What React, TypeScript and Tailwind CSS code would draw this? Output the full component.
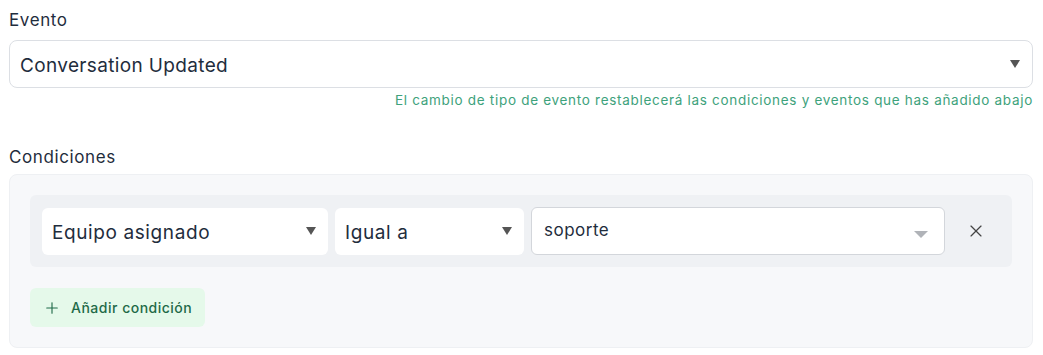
import { X, Plus } from "lucide-react";

// Small solid caret used by the native-looking selects
const Caret = ({ className }: { className?: string }) => (
    <svg width="10" height="8" viewBox="0 0 10 8" className={className}>
        <path d="M0 0 L10 0 L5 8 Z" fill="currentColor" />
    </svg>
);

const SelectBox = ({ label, width }: { label: string; width: string }) => (
    <div className={`${width} h-[47px] bg-white rounded-md flex items-center justify-between pl-[10px] pr-[12px]`}>
        <span className="text-[19px] tracking-[0.6px] text-[#1f2d3d] pt-[4px]">{label}</span>
        <Caret className="text-[#555]" />
    </div>
);

const App: React.FC = () => {
    return (
        <div
            className="w-[1043px] h-[355px] bg-white pl-[9px] pr-[10px] pt-[8px]"
            style={{ fontFamily: "Inter, 'Noto Sans', sans-serif" }}
        >
            {/* Evento */}
            <label className="block text-[17px] leading-6 text-[#1f2d3d] tracking-[0.6px]">Evento</label>
            <div className="mt-2 h-[48px] border border-[#dcdfe4] rounded-lg flex items-center justify-between pl-[10px] pr-[12px]">
                <span className="text-[19px] text-[#1f2d3d] tracking-[0.35px] pt-[4px]">Conversation Updated</span>
                <Caret className="text-[#555]" />
            </div>
            <p className="mt-[3px] text-right text-[13.5px] leading-[18px] text-[#3ea27c] tracking-[0.7px]">
                El cambio de tipo de evento restablecerá las condiciones y eventos que has añadido abajo
            </p>

            {/* Condiciones */}
            <label className="block mt-[36px] text-[17px] leading-6 text-[#1f2d3d] tracking-[0.6px]">Condiciones</label>
            <section className="mt-[5px] bg-[#f7f8fa] border border-[#eef0f3] rounded-lg px-[20px] pt-[20px] pb-[20px]">
                <div className="bg-[#eff1f4] rounded-md flex items-center gap-[7px] px-[12px] py-[12px]">
                    <SelectBox label="Equipo asignado" width="w-[286px]" />
                    <SelectBox label="Igual a" width="w-[189px]" />
                    <div className="flex-1 h-[48px] bg-white border border-[#d3d6db] rounded-md flex items-center justify-between pl-[12px] pr-[16px]">
                        <span className="text-[17px] tracking-[0.5px] text-[#1f2d3d]">soporte</span>
                        <svg width="14" height="7" viewBox="0 0 14 7" className="text-[#b0b3b8] mt-[6px]">
                            <path d="M0 0 L14 0 L7 7 Z" fill="currentColor" />
                        </svg>
                    </div>
                    <button className="w-[48px] h-[48px] flex items-center justify-center text-[#444]">
                        <X size={20} strokeWidth={1.4} />
                    </button>
                </div>
                <button className="mt-[21px] h-[39px] px-[13px] bg-[#e5f9ea] rounded-md flex items-center gap-[10px] text-[#1f6a48]">
                    <Plus size={18} strokeWidth={1.5} />
                    <span className="text-[14px] font-medium tracking-[0.5px]">Añadir condición</span>
                </button>
            </section>
        </div>
    );
};

export default App;
